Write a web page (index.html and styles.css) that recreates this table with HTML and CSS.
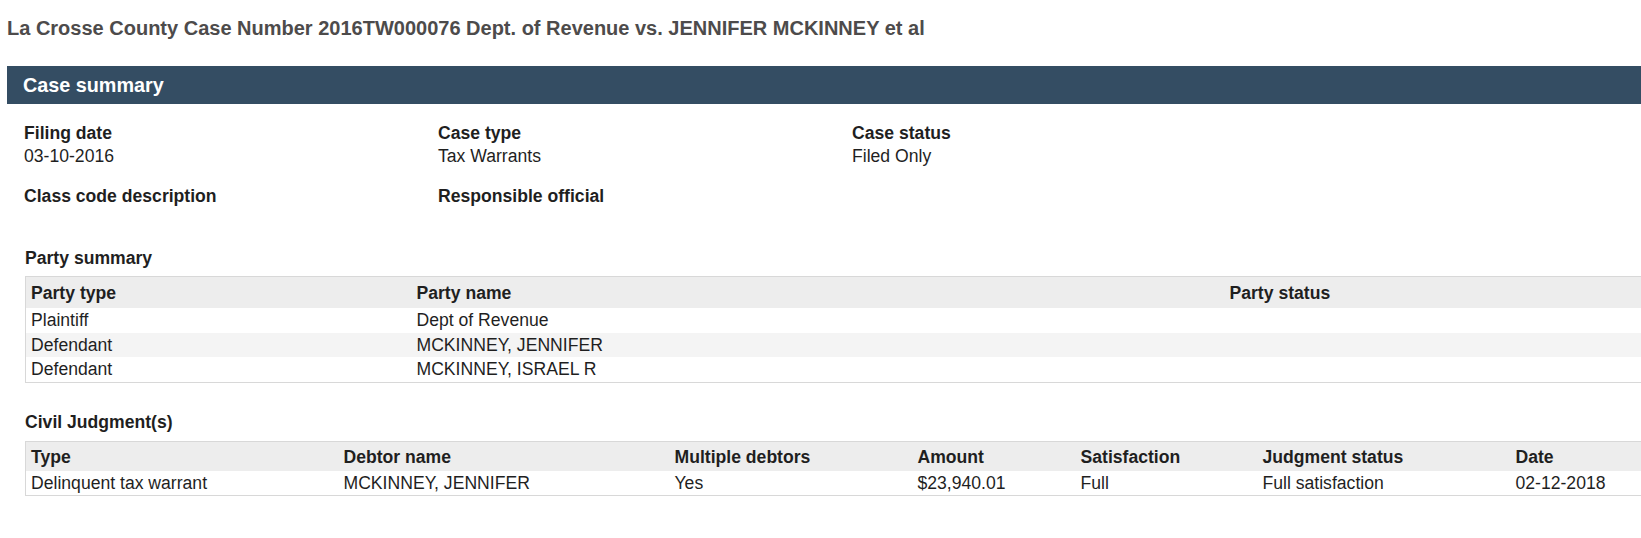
FILE: index.html
```html
<!DOCTYPE html>
<html lang="en">
<head>
<meta charset="utf-8">
<title>Case 2016TW000076</title>
<link rel="stylesheet" href="styles.css">
</head>
<body>
<div class="page">
  <h1 class="case-title">La Crosse County Case Number 2016TW000076 Dept. of Revenue vs. JENNIFER MCKINNEY et al</h1>
  <div class="bar">Case summary</div>

  <div class="summary">
    <div class="field">
      <div class="label">Filing date</div>
      <div class="value">03-10-2016</div>
    </div>
    <div class="field">
      <div class="label">Case type</div>
      <div class="value">Tax Warrants</div>
    </div>
    <div class="field">
      <div class="label">Case status</div>
      <div class="value">Filed Only</div>
    </div>
    <div class="field">
      <div class="label">Class code description</div>
      <div class="value"></div>
    </div>
    <div class="field">
      <div class="label">Responsible official</div>
      <div class="value"></div>
    </div>
  </div>

  <section class="block party">
    <h2 class="block-title">Party summary</h2>
    <table class="grid-table">
      <colgroup>
        <col class="c-ptype">
        <col class="c-pname">
        <col>
      </colgroup>
      <thead>
        <tr><th>Party type</th><th>Party name</th><th>Party status</th></tr>
      </thead>
      <tbody>
        <tr><td>Plaintiff</td><td>Dept of Revenue</td><td></td></tr>
        <tr><td>Defendant</td><td>MCKINNEY, JENNIFER</td><td></td></tr>
        <tr><td>Defendant</td><td>MCKINNEY, ISRAEL R</td><td></td></tr>
      </tbody>
    </table>
  </section>

  <section class="block judgment">
    <h2 class="block-title">Civil Judgment(s)</h2>
    <table class="grid-table">
      <colgroup>
        <col class="c-type">
        <col class="c-debtor">
        <col class="c-multi">
        <col class="c-amount">
        <col class="c-sat">
        <col class="c-status">
        <col>
      </colgroup>
      <thead>
        <tr><th>Type</th><th>Debtor name</th><th>Multiple debtors</th><th>Amount</th><th>Satisfaction</th><th>Judgment status</th><th>Date</th></tr>
      </thead>
      <tbody>
        <tr><td>Delinquent tax warrant</td><td>MCKINNEY, JENNIFER</td><td>Yes</td><td>$23,940.01</td><td>Full</td><td>Full satisfaction</td><td>02-12-2018</td></tr>
      </tbody>
    </table>
  </section>
</div>
</body>
</html>
```

FILE: styles.css
```css
html, body {
  margin: 0;
  padding: 0;
  overflow: hidden;
  background: #ffffff;
}

body {
  font-family: "Liberation Sans", Arial, sans-serif;
  font-size: 17.6px;
  color: #1f1f1f;
}

.page {
  width: 1700px;
  padding: 17px 0 0 7px;
}

.case-title {
  margin: 0;
  font-size: 20px;
  line-height: 23px;
  font-weight: bold;
  color: #4d4b4b;
}

.bar {
  margin-top: 26px;
  height: 38px;
  line-height: 38px;
  padding-left: 16px;
  background: #344d63;
  color: #ffffff;
  font-size: 19.8px;
  font-weight: bold;
}

.summary {
  margin-top: 17.5px;
  padding-left: 17px;
  display: grid;
  grid-template-columns: 414px 414px 414px;
  row-gap: 17px;
}

.label {
  font-weight: bold;
  line-height: 23px;
}

.value {
  line-height: 23px;
  min-height: 23px;
}

.block {
  padding-left: 18px;
}

.party {
  margin-top: 16.5px;
}

.judgment {
  margin-top: 28px;
}

.block-title {
  margin: 0;
  font-size: 17.6px;
  line-height: 23px;
  font-weight: bold;
}

.party .block-title {
  margin-bottom: 6px;
}

.judgment .block-title {
  margin-bottom: 7.5px;
}

.grid-table {
  width: 1660px;
  table-layout: fixed;
  border-collapse: collapse;
  border: 1px solid #d8d8d8;
}

.grid-table th,
.grid-table td {
  text-align: left;
  padding: 0 4px 0 5px;
  white-space: nowrap;
}

.grid-table th {
  background: #ededed;
  font-weight: bold;
  height: 31px;
  line-height: 20px;
}

.grid-table td {
  height: 24.5px;
  line-height: 20px;
}

.grid-table tbody tr:nth-child(even) td {
  background: #f4f4f4;
}

.c-ptype { width: 386px; }
.c-pname { width: 813px; }

.judgment .grid-table th {
  height: 29px;
}

.judgment .grid-table td {
  height: 24px;
}

.c-type { width: 313px; }
.c-debtor { width: 331px; }
.c-multi { width: 243px; }
.c-amount { width: 163px; }
.c-sat { width: 182px; }
.c-status { width: 253px; }
```
